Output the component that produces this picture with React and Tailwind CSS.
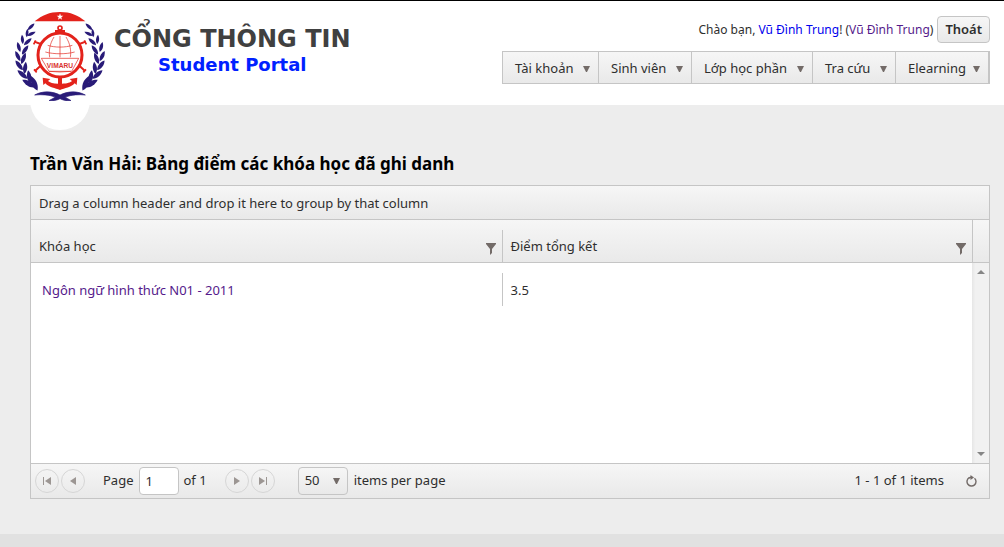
const menu = [
  { label: "Tài khoản", width: "w-[96px]" },
  { label: "Sinh viên", width: "w-[93px]" },
  { label: "Lớp học phần", width: "w-[121px]" },
  { label: "Tra cứu", width: "w-[83px]" },
  { label: "Elearning", width: "w-[92px]" },
];

const chrome = "bg-linear-to-b from-[#f6f6f6] to-[#e9e9e9]";

function DownArrow() {
  return (
    <svg className="h-[6px] w-[7px] shrink-0" viewBox="0 0 7 6" fill="#736b68" aria-hidden="true">
      <path d="M0 0H7L4 6H3Z" />
    </svg>
  );
}

function Leaf({ x, y, r, s }) {
  return <path transform={`translate(${x} ${y}) rotate(${r}) scale(${s})`} d="M0 -14C6 -6 7 5 1 14C-6 7 -6 -5 0 -14Z" />;
}

const leaves = [
  [93, 80, 48, 1], [81, 99, 8, 0.9], [94, 101, 66, 1],
  [67, 118, -4, 1], [83, 125, 50, 1.1],
  [56, 141, -14, 1.1], [75, 149, 36, 1.2],
  [53, 168, -24, 1.2], [70, 175, 22, 1.3],
  [57, 196, -36, 1.3], [75, 203, 8, 1.3],
  [67, 224, -48, 1.4], [87, 230, -8, 1.4],
  [86, 251, -58, 1.6], [102, 250, -22, 1.7],
];

function Wreath() {
  return (
    <g fill="#291b78">
      {leaves.map(([x, y, r, s]) => (
        <Leaf key={`${x}-${y}`} x={x} y={y} r={r} s={s} />
      ))}
    </g>
  );
}

function Emblem() {
  return (
    <svg className="relative h-[89px] w-[90px] shrink-0" viewBox="45 36 270 267" role="img" aria-label="VIMARU">
      <path d="M104 64C126 46 148 36 180 36S234 46 256 64Z" fill="#e3221b" />
      <path d="M180 40L182.500 47H190L184 51.500L186 59L180 54.500L174 59L176 51.500L170 47H177.500Z" fill="#fff" />
      <Wreath />
      <g transform="translate(360 0) scale(-1 1)">
        <Wreath />
      </g>
      <path
        d="M104 285C128 272 156 273 180 285C204 273 232 272 256 285C236 283 216 284 196 291C202 296 210 299 213 302C198 303 188 300 180 296C170 301 160 303 147 302C152 298 160 296 166 291C146 284 126 283 104 285Z"
        fill="#291b78"
        stroke="#291b78"
        strokeWidth="2"
      />
      <g stroke="#e3221b" fill="none">
        <circle cx="180" cy="165" r="66" strokeWidth="9" />
        <circle cx="180" cy="84" r="6" strokeWidth="5" />
        <path d="M165 93H195M180 90V101" strokeWidth="6" />
        <path d="M122 132L103 125M238 132L257 125M121 198L105 213M239 198L255 213" strokeWidth="6" />
        <path d="M101 133L107 121M259 133L253 121M102 208L110 217M258 208L250 217" strokeWidth="5" />
        <path d="M180 108V172M143 136C164 143 196 143 217 136M136 156C162 163 198 163 224 156M162 111C149 132 146 152 149 172M198 111C211 132 214 152 211 172" strokeWidth="2" />
        <path d="M124 175H236L215 214H147L124 175Z" strokeWidth="2" />
        <path d="M147 214L180 216L213 214" strokeWidth="2" />
      </g>
      <path d="M174 230H186V251C201 251 212 247 216 243L209 237L232 233L230 255L224 250C213 263 194 264 180 270C166 264 147 263 136 250L130 255L128 233L151 237L144 243C149 248 160 251 174 251Z" fill="#e3221b" />
      <text x="180" y="204" textAnchor="middle" fontFamily="Liberation Sans, sans-serif" fontWeight="700" fontSize="20" fill="#d9342f">
        VIMARU
      </text>
    </svg>
  );
}

function FilterButton({ column }) {
  return (
    <button type="button" aria-label={`Filter ${column}`} className="shrink-0 pt-1">
      <svg className="h-[12px] w-[10px]" viewBox="0 0 10 12" fill="#736b68" aria-hidden="true">
        <path d="M0 0H10V1L6 6V10L4 12V6L0 1Z" />
      </svg>
    </button>
  );
}

function PagerButton({ label, children }) {
  return (
    <button
      type="button"
      aria-label={label}
      className="flex size-6 shrink-0 items-center justify-center rounded-full border border-[#d6d6d6]"
    >
      <svg className="h-[8px] w-[8px]" viewBox="0 0 8 8" fill="#9c9693" aria-hidden="true">
        {children}
      </svg>
    </button>
  );
}

function Header() {
  return (
    <header className="flex h-[105px] justify-between border-t border-black bg-white pr-[14px] pl-[15px]">
      <div className="relative flex h-full items-start pt-[11px]">
        <div className="absolute top-[69px] left-[15px] size-[60px] rounded-full bg-white" />
        <Emblem />
        <div className="pt-[14px] pl-[9px] text-center font-['DejaVu_Sans',sans-serif] font-bold">
          <p className="text-[24px] leading-[26px] whitespace-nowrap text-[#404040]">CỔNG THÔNG TIN</p>
          <p className="text-[18px] leading-[26px] text-[#0021ff]">Student Portal</p>
        </div>
      </div>
      <div className="flex flex-col items-end pt-[15px]">
        <div className="flex items-center gap-1 text-xs">
          <p className="whitespace-nowrap">
            Chào bạn, <a href="#profile" className="text-[#0000ee]">Vũ Đình Trung</a>! (
            <a href="#account" className="text-[#551a8b]">Vũ Đình Trung</a>)
          </p>
          <button type="button" className={`h-[27px] rounded border border-[#c5c5c5] px-[7px] text-[13px] font-semibold ${chrome}`}>
            Thoát
          </button>
        </div>
        <nav className={`mt-2 flex h-[33px] border border-r-2 border-[#c5c5c5] ${chrome}`}>
          {menu.map(({ label, width }) => (
            <button
              key={label}
              type="button"
              className={`flex items-center justify-between border-r border-[#c5c5c5] pt-[2px] pr-2 pl-3 whitespace-nowrap last:border-r-0 ${width}`}
            >
              {label}
              <DownArrow />
            </button>
          ))}
        </nav>
      </div>
    </header>
  );
}

function Grid() {
  return (
    <section className="border border-[#c5c5c5] bg-white">
      <div className={`flex h-[34px] items-center border-b border-[#c5c5c5] px-2 pt-[2px] ${chrome}`}>
        Drag a column header and drop it here to group by that column
      </div>
      <div className="flex h-[243px]">
        <table className="w-full flex-1 table-fixed border-separate border-spacing-0 self-start text-left">
          <thead className={chrome}>
            <tr>
              <th scope="col" className="h-[43px] border-b border-[#c5c5c5] p-0 pt-[10px] font-normal">
                <div className="flex h-8 items-center justify-between pt-[2px] pr-[6px] pl-2">
                  Khóa học
                  <FilterButton column="Khóa học" />
                </div>
              </th>
              <th scope="col" className="h-[43px] border-b border-[#c5c5c5] p-0 pt-[10px] font-normal">
                <div className="flex h-8 items-center justify-between border-l border-[#c5c5c5] pt-[2px] pr-[6px] pl-2">
                  Điểm tổng kết
                  <FilterButton column="Điểm tổng kết" />
                </div>
              </th>
            </tr>
          </thead>
          <tbody>
            <tr>
              <td className="p-0 pt-[10px]">
                <div className="flex h-[33px] items-center pt-[2px] pl-[11px]">
                  <a href="#course" className="text-[#551a8b]">Ngôn ngữ hình thức N01 - 2011</a>
                </div>
              </td>
              <td className="p-0 pt-[10px]">
                <div className="flex h-[33px] items-center border-l border-[#c5c5c5] pt-[2px] pl-2">3.5</div>
              </td>
            </tr>
          </tbody>
        </table>
        <div className="flex w-[17px] shrink-0 flex-col">
          <div className={`h-[43px] shrink-0 border-b border-l border-[#c5c5c5] ${chrome}`} />
          <div className="flex flex-1 flex-col items-center justify-between bg-linear-to-r from-[#e6e6e6] to-[#f1f1f1] to-20% py-[7px]">
            <svg className="h-[4px] w-[8px]" viewBox="0 0 8 4" fill="#858585" aria-hidden="true">
              <path d="M4 0L8 4H0Z" />
            </svg>
            <svg className="h-[4px] w-[8px]" viewBox="0 0 8 4" fill="#858585" aria-hidden="true">
              <path d="M0 0H8L4 4Z" />
            </svg>
          </div>
        </div>
      </div>
      <footer className={`flex h-[35px] items-center justify-between border-t border-[#c5c5c5] pr-3 pl-1 ${chrome}`}>
        <div className="flex items-center">
          <div className="flex gap-[2px]">
            <PagerButton label="First page"><path d="M0 0H1V8H0ZM8 0V8L2 4Z" /></PagerButton>
            <PagerButton label="Previous page"><path d="M7 0V8L1 4Z" /></PagerButton>
          </div>
          <label className="flex items-center pl-[18px]">
            Page
            <input type="text" defaultValue="1" className="mx-[5px] h-[28px] w-[40px] rounded border border-[#c5c5c5] bg-white px-[6px]" />
            of 1
          </label>
          <div className="flex gap-[2px] pl-[18px]">
            <PagerButton label="Next page"><path d="M1 0V8L7 4Z" /></PagerButton>
            <PagerButton label="Last page"><path d="M7 0H8V8H7ZM0 0V8L6 4Z" /></PagerButton>
          </div>
          <label className="flex items-center gap-[6px] pl-[23px]">
            <span className="grid items-center">
              <select defaultValue="50" className={`col-start-1 row-start-1 h-[28px] w-[50px] appearance-none rounded border border-[#c5c5c5] pl-[6px] ${chrome}`}>
                <option>50</option>
                <option>100</option>
              </select>
              <span className="pointer-events-none col-start-1 row-start-1 mr-2 justify-self-end">
                <DownArrow />
              </span>
            </span>
            items per page
          </label>
        </div>
        <div className="flex items-center gap-[22px]">
          <span>1 - 1 of 1 items</span>
          <button type="button" aria-label="Refresh">
            <svg className="h-[12px] w-[11px]" viewBox="0 0 11 12" aria-hidden="true">
              <path d="M8.500 3.200A4.500 4.500 0 1 1 3.200 2.700" fill="none" stroke="#736b68" strokeWidth="1.400" />
              <path d="M4.500 0L8 2.500L4.500 5Z" fill="#736b68" />
              <path d="M3 3L5.500 2" stroke="#736b68" strokeWidth="1.400" />
            </svg>
          </button>
        </div>
      </footer>
    </section>
  );
}

export default function App() {
  return (
    <div className="flex min-h-screen flex-col bg-[#ededed] font-['Noto_Sans','Open_Sans',sans-serif] text-[13px] text-[#2e2e2e]">
      <Header />
      <main className="flex-1 pt-[47px] pr-[14px] pb-[35px] pl-[30px]">
        <h1 className="mb-[9px] text-[17px] leading-6 font-bold text-black">
          Trần Văn Hải: Bảng điểm các khóa học đã ghi danh
        </h1>
        <Grid />
      </main>
      <div className="h-[13px] bg-[#e1e1e1]" />
    </div>
  );
}
